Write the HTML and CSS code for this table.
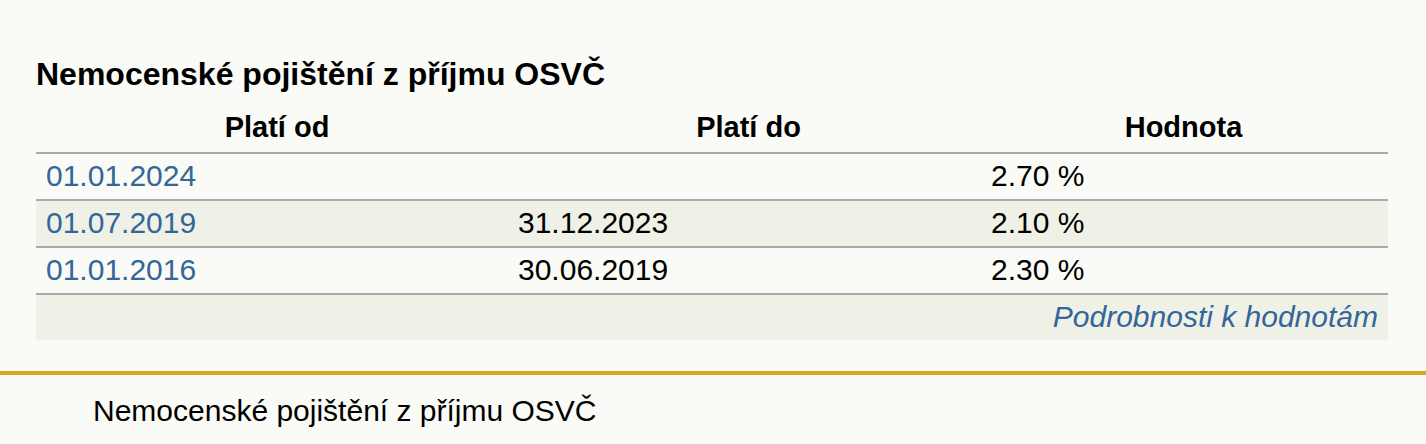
FILE: index.html
```html
<!DOCTYPE html>
<html lang="cs">
<head>
<meta charset="utf-8">
<title>Nemocenské pojištění z příjmu OSVČ</title>
<link rel="stylesheet" href="styles.css">
</head>
<body>
<main class="content">
  <h2 class="title">Nemocenské pojištění z příjmu OSVČ</h2>
  <table class="rates">
    <colgroup>
      <col class="col-from">
      <col class="col-to">
      <col class="col-value">
    </colgroup>
    <thead>
      <tr>
        <th>Platí od</th>
        <th>Platí do</th>
        <th>Hodnota</th>
      </tr>
    </thead>
    <tbody>
      <tr>
        <td class="cell-from"><a href="#" class="link">01.01.2024</a></td>
        <td class="cell-to"></td>
        <td class="cell-value">2.70 %</td>
      </tr>
      <tr class="alt">
        <td class="cell-from"><a href="#" class="link">01.07.2019</a></td>
        <td class="cell-to">31.12.2023</td>
        <td class="cell-value">2.10 %</td>
      </tr>
      <tr>
        <td class="cell-from"><a href="#" class="link">01.01.2016</a></td>
        <td class="cell-to">30.06.2019</td>
        <td class="cell-value">2.30 %</td>
      </tr>
    </tbody>
    <tfoot>
      <tr class="alt">
        <td colspan="3" class="cell-more"><a href="#" class="link more">Podrobnosti k hodnotám</a></td>
      </tr>
    </tfoot>
  </table>
</main>
<footer class="footer">
  <p class="footer-text">Nemocenské pojištění z příjmu OSVČ</p>
</footer>
</body>
</html>
```

FILE: styles.css
```css
html, body {
  margin: 0;
  padding: 0;
}

body {
  background: #fafaf6;
  color: #000;
  font-family: "Liberation Sans", Arial, sans-serif;
}

.content {
  padding: 56px 38px 31px 36px;
}

.title {
  margin: 0 0 10px 0;
  font-size: 32px;
  font-weight: bold;
  line-height: 37px;
}

.rates {
  width: 100%;
  border-collapse: collapse;
  table-layout: fixed;
}

.col-from { width: 482px; }
.col-to { width: 461px; }

.rates th {
  font-size: 29px;
  font-weight: bold;
  line-height: 33px;
  padding: 8px 0 8px 0;
  text-align: center;
  border-bottom: 2px solid #aaaaaa;
}

.rates td {
  font-size: 30px;
  line-height: 35px;
  padding: 4px 0 6px 0;
  text-align: left;
}

.rates tbody tr td {
  border-bottom: 2px solid #aaaaaa;
}

.cell-from { padding-left: 10px !important; }
.cell-to { padding-left: 0; }
.cell-value { padding-left: 12px !important; }

.alt {
  background: #f0f1e6;
}

.link {
  color: #336699;
  text-decoration: none;
}

.cell-more {
  text-align: right !important;
  padding-right: 10px !important;
}

.more {
  font-style: italic;
}

.footer {
  border-top: 4px solid #daa520;
  padding: 18px 0 0 93px;
}

.footer-text {
  margin: 0;
  font-size: 30px;
  line-height: 35px;
}
```
